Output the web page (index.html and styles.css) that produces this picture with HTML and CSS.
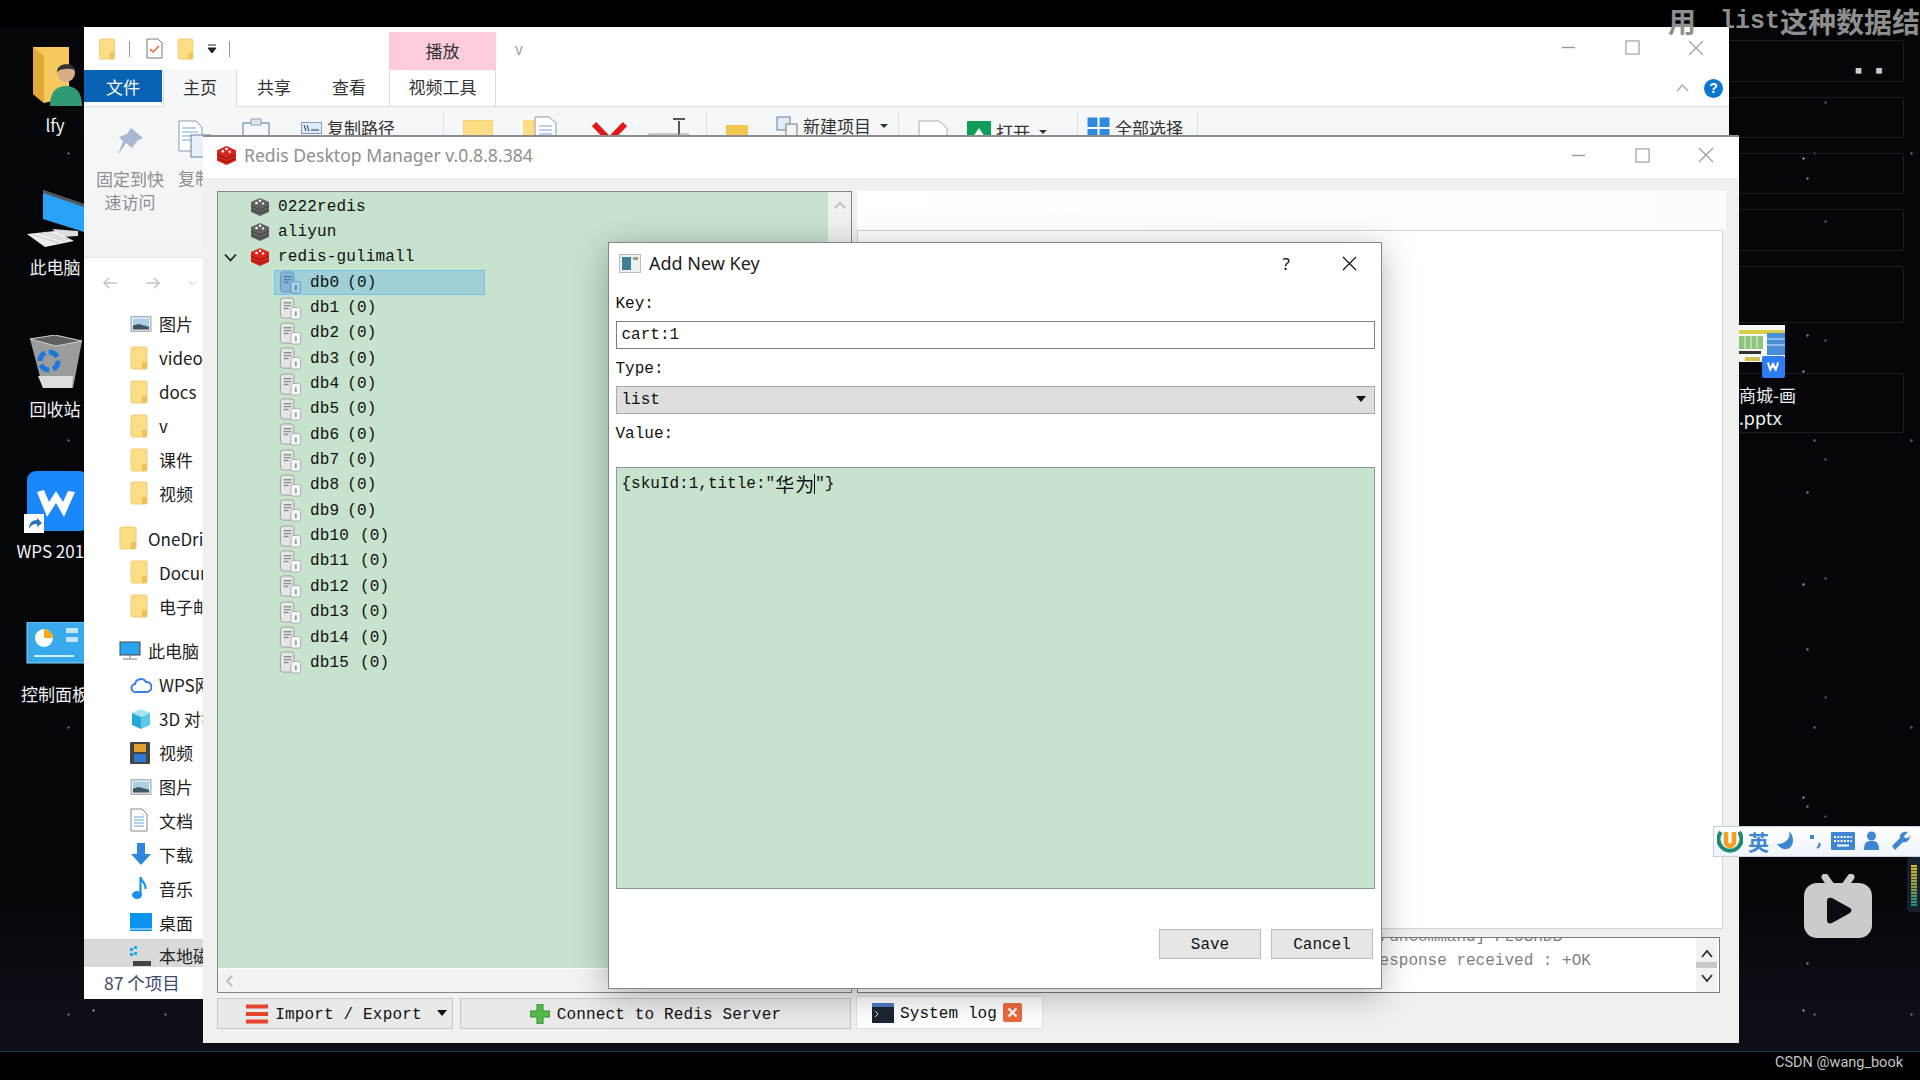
FILE: index.html
```html
<!DOCTYPE html>
<html lang="zh">
<head>
<meta charset="utf-8">
<title>Redis Desktop Manager</title>
<link rel="stylesheet" href="styles.css">
</head>
<body>
<svg class="defs" aria-hidden="true">
  <symbol id="folder" viewBox="0 0 18 24"><rect x="1" y="1" width="16" height="22" rx="1.5" fill="#fcdc84" stroke="#eccb70"/><rect x="12" y="16" width="5" height="7" fill="#eec25a"/></symbol>
  <symbol id="stack" viewBox="0 0 20 20"><path fill="currentColor" d="M10 1 19 5v10l-9 4-9-4V5Z"/><path d="M1 9l9 4 9-4M1 12.500l9 4 9-4" stroke="#00000055" fill="none"/><circle cx="10" cy="3.800" r="1.300" fill="#fff"/><circle cx="6.500" cy="6" r="1.300" fill="#fff"/><circle cx="13" cy="6.500" r="1.300" fill="#ddd"/></symbol>
  <symbol id="db" viewBox="0 0 24 24"><rect x="1.500" y="1" width="14" height="21" rx="3" fill="#e4e6e5" stroke="#9aa09e"/><path d="M5 6h8M5 9h8M5 12h5" stroke="#8b908e" stroke-width="1.500"/><rect x="12.500" y="11" width="10" height="12" rx="2" fill="#f7f7f7" stroke="#a8acaa"/><path d="M17.500 15v5" stroke="#9aa09e" stroke-width="2"/></symbol>
  <symbol id="dbsel" viewBox="0 0 24 24"><rect x="1.500" y="1" width="14" height="21" rx="3" fill="#86b4d6" stroke="#5f95bf"/><path d="M5 6h8M5 9h8M5 12h5" stroke="#4f83ad" stroke-width="1.500"/><rect x="12.500" y="11" width="10" height="12" rx="2" fill="#a9cfe6" stroke="#5f95bf"/><path d="M17.500 15v5" stroke="#4f83ad" stroke-width="2"/></symbol>
  <symbol id="pic" viewBox="0 0 24 20"><rect x="1" y="2" width="22" height="16" fill="#f4f6f8" stroke="#7f8b96"/><rect x="3" y="4" width="18" height="12" fill="#a8d0e8"/><path d="M3 16v-4l6-2 12 3v3Z" fill="#3f5560"/></symbol>
  <symbol id="min" viewBox="0 0 16 16"><path d="M1 8h14" stroke="#999" stroke-width="1.500"/></symbol>
  <symbol id="max" viewBox="0 0 16 16"><rect x="1" y="1" width="14" height="14" fill="none" stroke="#999" stroke-width="1.200"/></symbol>
  <symbol id="close" viewBox="0 0 16 16"><path d="M1 1l14 14M15 1 1 15" stroke="#999" stroke-width="1.100"/></symbol>
</svg>

<div class="desktop">
  <div class="panel p1"></div><div class="panel p2"></div><div class="panel p3"></div><div class="panel p4"></div><div class="panel p5"></div><div class="panel p6"></div>
  <div class="dots">■ ■</div>

  <div class="dk-item dk-lfy">
    <svg class="dk-icon" width="60" height="59" viewBox="25 47 60 59"><path d="M33 47h36v50L44 103 33 94Z" fill="#f5c95e"/><path d="M44 103V56L33 47v47Z" fill="#e0a93a"/><path d="M50 106c0-14 6-20 16-20s16 6 16 20Z" fill="#2f9a73"/><circle cx="66" cy="73" r="9" fill="#d7ac86"/><path d="M57 72c0-10 17-10 18-2-6-2-14-2-18 2Z" fill="#333"/></svg>
    <span class="dk-label">lfy</span>
  </div>
  <div class="dk-item dk-pc">
    <svg class="dk-icon" width="60" height="59" viewBox="25 188 60 59"><path d="M43 190l41 14v28l-41-13Z" fill="#27a2f5"/><path d="M43 190l41 14v3l-41-14Z" fill="#555"/><path d="M52 229l26 2v5l-16 1Z" fill="#ddd"/><path d="M27 234l28-3 19 10-29 6Z" fill="#eee"/><path d="M33 235l26 8M39 233l26 8M45 232l24 8" stroke="#bbb" stroke-width=".8"/></svg>
    <span class="dk-label">此电脑</span>
  </div>
  <div class="dk-item dk-bin">
    <svg class="dk-icon" width="60" height="54" viewBox="25 335 60 54"><path d="M30 339l25-4 27 6-9 47H43Z" fill="#9a9c9e"/><path d="M30 339l25-4 27 6-26 5Z" fill="#5d5f61" stroke="#ccc"/><path d="M38 376l35 0-1 12H43Z" fill="#dcdcdc"/><circle cx="49" cy="361" r="9" fill="none" stroke="#1878dc" stroke-width="5" stroke-dasharray="10 4"/></svg>
    <span class="dk-label">回收站</span>
  </div>
  <div class="dk-item dk-wps">
    <svg class="dk-icon" width="70" height="63" viewBox="20 471 70 63"><rect x="27" y="471" width="62" height="60" rx="9" fill="#1a87fb"/><path d="M37 492l10 25 9-14 8 14 11-25-7-1-5 11-7-11-7 11-5-12Z" fill="#fff"/><rect x="24" y="514" width="20" height="19" fill="#fff"/><path d="M29 529c0-6 3-9 8-9v-2l5 5-5 4v-3c-4 0-6 1-8 5Z" fill="#2c73b8"/></svg>
    <span class="dk-label">WPS 2019</span>
  </div>
  <div class="dk-item dk-cp">
    <svg class="dk-icon" width="60" height="42" viewBox="25 622 60 42"><rect x="27" y="622" width="58" height="41" fill="#38a9ea" stroke="#8cd4f5"/><circle cx="44" cy="638" r="9" fill="#fff"/><path d="M44 638v-9a9 9 0 0 1 9 9Z" fill="#f4a81e"/><rect x="66" y="628" width="12" height="5" fill="#bfe6f8"/><rect x="66" y="637" width="12" height="5" fill="#bfe6f8"/><path d="M34 656h40" stroke="#cdeefc" stroke-width="2"/></svg>
    <span class="dk-label">控制面板</span>
  </div>

  <div class="thumb">
    <svg width="58" height="54" viewBox="1739 325 58 54"><rect x="1739" y="325" width="46" height="37" fill="#f5f8f2"/><rect x="1739" y="330" width="46" height="4" fill="#d6cf45"/><rect x="1739" y="336" width="24" height="13" fill="#8cc67c"/><path d="M1745 336v13M1751 336v13M1757 336v13" stroke="#e6f2df"/><rect x="1767" y="333" width="18" height="22" fill="#4a8dd8"/><path d="M1767 339h18M1767 345h18" stroke="#dce8f6"/><rect x="1739" y="351" width="22" height="3" fill="#333"/><rect x="1745" y="357" width="15" height="4" fill="#d8c24f"/><rect x="1762" y="356" width="23" height="22" rx="2" fill="#2d7cf4"/><path d="M1767 363l3 9 3-5 3 5 3-9-2-1-1 5-3-5-3 5-1-5Z" fill="#fff"/></svg>
    <span class="thumb-name">商城-画</span>
    <span class="thumb-ext">.pptx</span>
  </div>

  <section class="explorer">
    <div class="qat">
      <svg class="q-f1" width="18" height="22"><use href="#folder"/></svg>
      <i class="q-sep q-s1"></i>
      <svg class="q-chk" width="17" height="21" viewBox="0 0 17 21"><path d="M1 1h11l4 4v15H1Z" fill="#fff" stroke="#777"/><path d="M4 11l3 3 6-6" fill="none" stroke="#e0692a" stroke-width="1.500"/></svg>
      <svg class="q-f2" width="19" height="22"><use href="#folder"/></svg>
      <svg class="q-car" width="10" height="10" viewBox="0 0 10 10"><path d="M1 1h8M1 4h8l-4 5Z" fill="#222" stroke="#222"/></svg>
      <i class="q-sep q-s2"></i>
      <div class="pink">播放</div>
      <span class="q-v">v</span>
      <div class="winctl">
        <span class="wbtn"><svg width="15" height="15"><use href="#min"/></svg></span>
        <span class="wbtn"><svg width="15" height="15"><use href="#max"/></svg></span>
        <span class="wbtn"><svg width="16" height="16"><use href="#close"/></svg></span>
      </div>
    </div>
    <div class="tabs">
      <span class="tab t-file">文件</span>
      <span class="tab t-home">主页</span>
      <span class="tab t-share">共享</span>
      <span class="tab t-view">查看</span>
      <span class="tab t-video">视频工具</span>
      <svg class="t-up" width="13" height="8" viewBox="0 0 13 8"><path d="M1 7l5.500-6L12 7" fill="none" stroke="#aaa" stroke-width="1.300"/></svg>
      <span class="t-help">?</span>
    </div>
    <div class="ribbon">
      <div class="rb rb-pin">
        <svg width="28" height="30" viewBox="0 0 28 30"><path d="M15 1l12 10-6 3-5 7-6-5-8 12 5-14-4-4 8-3Z" fill="#a9b8d2"/></svg>
        <span class="rb-cap">固定到快<br>速访问</span>
      </div>
      <div class="rb rb-copy">
        <svg width="34" height="38" viewBox="0 0 34 38"><path d="M1 1h17l6 6v24H1Z" fill="#fff" stroke="#8a97aa"/><path d="M4 8h14M4 12h16M4 16h16M4 20h16" stroke="#7ba4d6"/><rect x="13" y="15" width="20" height="22" fill="#e8f0fa" stroke="#5e7ea6"/></svg>
        <span class="rb-cap">复制</span>
      </div>
      <svg class="rb-paste" width="28" height="20" viewBox="0 0 28 20"><rect x="1" y="5" width="26" height="20" fill="#f6f8fa" stroke="#8c9fb8" stroke-width="1.500"/><rect x="9" y="1" width="10" height="6" fill="#dfe6ee" stroke="#8c9fb8"/></svg>
      <div class="rb-line rb-path"><svg width="21" height="12" viewBox="0 0 21 12"><rect x=".5" y=".5" width="20" height="11" fill="#dcecf8" stroke="#7e9cc0"/><path d="M3 3l2 6M6 3l2 6M10 8h8" stroke="#335" stroke-width="1"/></svg><span>复制路径</span></div>
      <i class="rb-sep rb-s1"></i>
      <svg class="rb-fold" width="30" height="24"><rect width="30" height="24" rx="1" fill="#fcdc84" stroke="#eccb70"/></svg>
      <svg class="rb-mv" width="37" height="24" viewBox="0 0 37 24"><rect x="1" y="4" width="18" height="20" fill="#fcdc84"/><path d="M13 1h14l7 6v17H13Z" fill="#fff" stroke="#8a97aa"/><path d="M17 10h13M17 14h13M17 18h13" stroke="#7ba4d6"/></svg>
      <svg class="rb-del" width="35" height="20" viewBox="0 0 35 20"><path d="M2 2l15.500 16L33 2" fill="none" stroke="#e01818" stroke-width="6"/></svg>
      <svg class="rb-ren" width="41" height="24" viewBox="0 0 41 24"><path d="M31 3v22M25 1h12" stroke="#555" stroke-width="2"/><rect x="1" y="16" width="40" height="10" fill="none" stroke="#999"/></svg>
      <i class="rb-sep rb-s2"></i>
      <svg class="rb-fold2" width="22" height="20"><rect width="22" height="20" fill="#f2c750"/></svg>
      <div class="rb-line rb-new"><svg width="22" height="20" viewBox="0 0 22 20"><rect x="1" y="1" width="13" height="13" fill="#dcecf8" stroke="#5e7ea6"/><rect x="10" y="8" width="11" height="12" fill="#f4f4f4" stroke="#777"/></svg><span>新建项目</span><b class="caret"></b></div>
      <i class="rb-sep rb-s3"></i>
      <svg class="rb-prop" width="32" height="24" viewBox="0 0 32 24"><path d="M2 1h20l8 7v20H2Z" fill="#fff" stroke="#aaa"/></svg>
      <div class="rb-line rb-open"><svg width="24" height="22" viewBox="0 0 24 22"><rect width="24" height="22" rx="1" fill="#0f9d58"/><path d="M6 16l6-9 6 9Z" fill="#fff"/></svg><span>打开</span><b class="caret"></b></div>
      <i class="rb-sep rb-s4"></i>
      <div class="rb-line rb-all"><svg width="23" height="22" viewBox="0 0 23 22"><rect x=".5" y=".5" width="22" height="21" fill="#2d8ae0"/><path d="M11.500 0v22M0 11h23" stroke="#fff" stroke-width="2"/></svg><span>全部选择</span></div>
      <i class="rb-sep rb-s5"></i>
    </div>
    <div class="main">
      <div class="navbar">
        <svg width="16" height="14" viewBox="0 0 16 14"><path d="M15 7H2M7 2 2 7l5 5" fill="none" stroke="#c4c4c4" stroke-width="1.500"/></svg>
        <svg width="16" height="14" viewBox="0 0 16 14"><path d="M1 7h13M9 2l5 5-5 5" fill="none" stroke="#c4c4c4" stroke-width="1.500"/></svg>
        <svg width="9" height="6" viewBox="0 0 9 6"><path d="M1 1l3.500 4L8 1" fill="none" stroke="#ccc"/></svg>
      </div>
      <div class="nav">
        <div class="nv"><svg width="22" height="18"><use href="#pic"/></svg><span>图片</span></div>
        <div class="nv"><svg width="18" height="24"><use href="#folder"/></svg><span>video</span></div>
        <div class="nv"><svg width="18" height="24"><use href="#folder"/></svg><span>docs</span></div>
        <div class="nv"><svg width="18" height="24"><use href="#folder"/></svg><span>v</span></div>
        <div class="nv"><svg width="18" height="24"><use href="#folder"/></svg><span>课件</span></div>
        <div class="nv"><svg width="18" height="24"><use href="#folder"/></svg><span>视频</span></div>
        <div class="nv lv1 grp"><svg width="18" height="24"><use href="#folder"/></svg><span>OneDrive</span></div>
        <div class="nv"><svg width="18" height="24"><use href="#folder"/></svg><span>Documents</span></div>
        <div class="nv"><svg width="18" height="24"><use href="#folder"/></svg><span>电子邮件</span></div>
        <div class="nv lv1 grp"><svg width="22" height="20" viewBox="0 0 22 20"><rect x="1" y="1" width="20" height="13" fill="#2ba4ee" stroke="#444"/><path d="M11 14v3M4 18h14" stroke="#777"/></svg><span>此电脑</span></div>
        <div class="nv"><svg width="22" height="18" viewBox="0 0 22 18"><path d="M6 16a4 4 0 0 1-1-8 6 6 0 0 1 11-2 5 5 0 0 1 1 10Z" fill="none" stroke="#3b7de0" stroke-width="2"/></svg><span>WPS网盘</span></div>
        <div class="nv"><svg width="22" height="22" viewBox="0 0 22 22"><path d="M11 1l9 4-9 4-9-4Z" fill="#a5e4f5"/><path d="M2 5l9 4v12l-9-4Z" fill="#27a6da"/><path d="M20 5l-9 4v12l9-4Z" fill="#5cc8ea"/></svg><span>3D 对象</span></div>
        <div class="nv"><svg width="20" height="22" viewBox="0 0 20 22"><rect width="20" height="22" rx="1" fill="#444"/><rect x="4" y="2" width="12" height="8" fill="#e0a030"/><rect x="4" y="12" width="12" height="8" fill="#2f78d0"/></svg><span>视频</span></div>
        <div class="nv"><svg width="22" height="18"><use href="#pic"/></svg><span>图片</span></div>
        <div class="nv"><svg width="18" height="24" viewBox="0 0 18 24"><path d="M1 1h11l5 5v17H1Z" fill="#fff" stroke="#888"/><path d="M4 9h10M4 12h10M4 15h10M4 18h10" stroke="#5aa7d8"/></svg><span>文档</span></div>
        <div class="nv"><svg width="22" height="24" viewBox="0 0 22 24"><path d="M7 1h8v11h6L11 23 1 12h6Z" fill="#2f86dc"/></svg><span>下载</span></div>
        <div class="nv"><svg width="18" height="24" viewBox="0 0 18 24"><ellipse cx="7" cy="19" rx="5" ry="4" fill="#1e90e8"/><path d="M10.500 19V1c1 5 6 6 5 12" fill="none" stroke="#1e90e8" stroke-width="2.200"/></svg><span>音乐</span></div>
        <div class="nv"><svg width="22" height="18" viewBox="0 0 22 18"><rect width="22" height="18" fill="#0b93ee"/><path d="M0 16h22" stroke="#d6eefc"/></svg><span>桌面</span></div>
        <div class="nv nv-sel"><svg width="22" height="20" viewBox="0 0 22 20"><rect x="0" y="2" width="3" height="3" fill="#19a8e8"/><rect x="4" y="0" width="3" height="3" fill="#19a8e8"/><rect x="0" y="7" width="3" height="3" fill="#19a8e8"/><rect x="4" y="6" width="3" height="3" fill="#19a8e8"/><rect x="3" y="15" width="18" height="5" fill="#444"/></svg><span>本地磁盘 (C:)</span></div>
      </div>
      <div class="status">87 个项目</div>
    </div>
  </section>

  <section class="redis">
    <header class="rd-title">
      <svg class="rd-logo" width="23" height="21" style="color:#d5261f"><use href="#stack"/></svg>
      <span class="rd-name">Redis Desktop Manager v.0.8.8.384</span>
      <div class="winctl">
        <span class="wbtn"><svg width="15" height="15"><use href="#min"/></svg></span>
        <span class="wbtn"><svg width="15" height="15"><use href="#max"/></svg></span>
        <span class="wbtn"><svg width="16" height="16"><use href="#close"/></svg></span>
      </div>
    </header>
    <div class="rd-body">
      <div class="rd-left">
        <div class="tree">
          <div class="tree-top">
            <div class="tree-list">
              <div class="srv"><i class="arrow"></i><svg class="srv-ic grey" width="20" height="20"><use href="#stack"/></svg><span>0222redis</span></div>
              <div class="srv"><i class="arrow"></i><svg class="srv-ic grey" width="20" height="20"><use href="#stack"/></svg><span>aliyun</span></div>
              <div class="srv"><svg class="arrow" width="13" height="9" viewBox="0 0 13 9"><path d="M1 1.500l5.500 6 5.500-6" fill="none" stroke="#222" stroke-width="1.800"/></svg><svg class="srv-ic red" width="20" height="20"><use href="#stack"/></svg><span>redis-gulimall</span></div>
              <div class="dbr sel"><svg width="23" height="23"><use href="#dbsel"/></svg><span class="n">db0</span><span>(0)</span></div>
              <div class="dbr"><svg width="23" height="23"><use href="#db"/></svg><span class="n">db1</span><span>(0)</span></div>
              <div class="dbr"><svg width="23" height="23"><use href="#db"/></svg><span class="n">db2</span><span>(0)</span></div>
              <div class="dbr"><svg width="23" height="23"><use href="#db"/></svg><span class="n">db3</span><span>(0)</span></div>
              <div class="dbr"><svg width="23" height="23"><use href="#db"/></svg><span class="n">db4</span><span>(0)</span></div>
              <div class="dbr"><svg width="23" height="23"><use href="#db"/></svg><span class="n">db5</span><span>(0)</span></div>
              <div class="dbr"><svg width="23" height="23"><use href="#db"/></svg><span class="n">db6</span><span>(0)</span></div>
              <div class="dbr"><svg width="23" height="23"><use href="#db"/></svg><span class="n">db7</span><span>(0)</span></div>
              <div class="dbr"><svg width="23" height="23"><use href="#db"/></svg><span class="n">db8</span><span>(0)</span></div>
              <div class="dbr"><svg width="23" height="23"><use href="#db"/></svg><span class="n">db9</span><span>(0)</span></div>
              <div class="dbr"><svg width="23" height="23"><use href="#db"/></svg><span class="n n2">db10</span><span>(0)</span></div>
              <div class="dbr"><svg width="23" height="23"><use href="#db"/></svg><span class="n n2">db11</span><span>(0)</span></div>
              <div class="dbr"><svg width="23" height="23"><use href="#db"/></svg><span class="n n2">db12</span><span>(0)</span></div>
              <div class="dbr"><svg width="23" height="23"><use href="#db"/></svg><span class="n n2">db13</span><span>(0)</span></div>
              <div class="dbr"><svg width="23" height="23"><use href="#db"/></svg><span class="n n2">db14</span><span>(0)</span></div>
              <div class="dbr"><svg width="23" height="23"><use href="#db"/></svg><span class="n n2">db15</span><span>(0)</span></div>
            </div>
            <div class="vscroll"><svg width="12" height="8" viewBox="0 0 12 8"><path d="M1 7l5-5 5 5" fill="none" stroke="#c2c2c2" stroke-width="2"/></svg></div>
          </div>
          <div class="hscroll"><svg width="9" height="12" viewBox="0 0 9 12"><path d="M7 1 2 6l5 5" fill="none" stroke="#bdbdbd" stroke-width="2"/></svg></div>
        </div>
        <div class="toolbar">
          <button class="tbtn t-imp"><svg width="22" height="20" viewBox="0 0 22 20"><path d="M0 2.500h22M0 10h22M0 17.500h22" stroke="#e5432b" stroke-width="4"/></svg><span>Import / Export</span><b class="tri"></b></button>
          <button class="tbtn t-con"><svg width="20" height="20" viewBox="0 0 20 20"><path d="M7 0h6v7h7v6h-7v7H7v-7H0V7h7Z" fill="#55b948" stroke="#2f8f34"/></svg><span>Connect to Redis Server</span></button>
        </div>
      </div>
      <div class="rd-right">
        <div class="rr-top"></div>
        <div class="pane"></div>
        <div class="logbox">
          <div class="logtext"><div>[runCommand] FLUSHDB</div><div>response received : +OK</div></div>
          <div class="logscroll">
            <svg width="12" height="9" viewBox="0 0 12 9"><path d="M1 8l5-6 5 6" fill="none" stroke="#333" stroke-width="1.800"/></svg>
            <i class="thumbbar"></i>
            <svg width="12" height="9" viewBox="0 0 12 9"><path d="M1 1l5 6 5-6" fill="none" stroke="#333" stroke-width="1.800"/></svg>
          </div>
        </div>
        <div class="logtab">
          <svg width="22" height="20" viewBox="0 0 22 20"><rect width="22" height="20" fill="#1d2530"/><rect width="22" height="4" fill="#4a7cc4"/><path d="M3 8l3 3-3 3" fill="none" stroke="#ddd"/></svg>
          <span>System log</span>
          <svg width="19" height="19" viewBox="0 0 19 19"><rect width="19" height="19" rx="2" fill="#ee6a3c"/><path d="M5.500 5.500l8 8M13.500 5.500l-8 8" stroke="#fff" stroke-width="2.400"/></svg>
        </div>
      </div>
    </div>
  </section>

  <section class="dialog">
    <header class="dl-title">
      <svg width="22" height="19" viewBox="0 0 22 19"><rect x=".5" y=".5" width="21" height="18" fill="#eef0f0" stroke="#bbb"/><rect x="3" y="3" width="9" height="13" fill="#3f7f96"/><rect x="14" y="3" width="5" height="3" fill="#999"/></svg>
      <span class="dl-name">Add New Key</span>
      <span class="dl-q">?</span>
      <svg class="dl-x" width="15" height="15" viewBox="0 0 15 15"><path d="M1 1l13 13M14 1 1 14" stroke="#111" stroke-width="1.200"/></svg>
    </header>
    <div class="dl-body">
      <div class="lb lb-key">Key:</div>
      <div class="field">cart:1</div>
      <div class="lb lb-type">Type:</div>
      <div class="field select"><span>list</span><b class="tri"></b></div>
      <div class="lb lb-val">Value:</div>
      <div class="area">{skuId:1,title:"<span class="cjk">华为</span><i class="cursor"></i>"}</div>
      <div class="dl-actions">
        <button class="dbtn">Save</button>
        <button class="dbtn">Cancel</button>
      </div>
    </div>
  </section>

  <div class="ime">
    <svg width="26" height="24" viewBox="0 0 26 24"><path d="M4 3a11.500 11.500 0 1 0 18 0" fill="none" stroke="#1f8a70" stroke-width="4"/><path d="M9 3v10a4 4 0 0 0 8 0V3" fill="none" stroke="#f5a020" stroke-width="4.500"/></svg>
    <span class="ime-en">英</span>
    <svg width="18" height="19" viewBox="0 0 18 19"><path d="M12 0C14 7 9 13 0 13c3 4 7 6 10 5 6-1 9-11 2-18Z" fill="#3f86d2"/></svg>
    <svg width="11" height="16" viewBox="0 0 11 16"><rect x="0" y="2" width="4" height="4" fill="#3f86d2"/><path d="M9 10c1 2 0 4-2 5" stroke="#3f86d2" stroke-width="2.200" fill="none"/></svg>
    <svg width="24" height="18" viewBox="0 0 24 18"><rect width="24" height="18" rx="1" fill="#3f86d2"/><path d="M3 5h18M3 9h18" stroke="#fff" stroke-width="2" stroke-dasharray="2 1.300"/><path d="M6 13.500h12" stroke="#fff" stroke-width="2"/></svg>
    <svg width="15" height="19" viewBox="0 0 15 19"><circle cx="7.500" cy="5" r="4.500" fill="#3f86d2"/><path d="M0 19c0-8 3-9 7.500-9S15 11 15 19Z" fill="#3f86d2"/></svg>
    <svg width="20" height="19" viewBox="0 0 20 19"><path d="M2 15 10 7c-1-4 3-7 8-6l-4 4 1 2 3 0 2-3c0 5-3 8-7 7l-8 8Z" fill="#3f86d2"/></svg>
  </div>
  <div class="meter"><i class="m-bar"></i></div>
  <svg class="tv" width="68" height="64" viewBox="0 0 68 64"><path d="M21 3l7 10M47 3l-7 10" stroke="#ccc" stroke-width="7" stroke-linecap="round"/><rect y="9" width="68" height="55" rx="13" fill="#cbcbcb"/><path d="M23 27c0-3 2-4 5-3l18 10c2 1 2 3 0 5l-18 10c-3 1-5 0-5-3Z" fill="#0a0d14"/></svg>

  <div class="bar-top"></div>
  <div class="bar-bottom"><span class="csdn">CSDN @wang_book</span></div>
  <div class="watermark"><span class="wm-c">用</span><span class="wm-l">list</span><span class="wm-c">这种数据结构</span></div>
</div>
</body>
</html>
```
FILE: styles.css
```css
* { box-sizing: border-box; }
html, body { margin: 0; padding: 0; background: #000; }
body { width: 1920px; height: 1080px; overflow: hidden; font-family: "Noto Sans CJK SC", "Noto Sans", sans-serif; }
.defs { position: absolute; width: 0; height: 0; }
svg { display: block; flex: none; }

.desktop {
  position: relative; width: 1920px; height: 1080px; overflow: hidden;
  background-color: #05060a;
  background-image:
    radial-gradient(circle, #778 0 1px, transparent 1.500px),
    radial-gradient(circle, #667 0 1px, transparent 1.500px),
    radial-gradient(circle, #556 0 1px, transparent 1.500px),
    radial-gradient(circle, #445 0 1px, transparent 1.500px),
    linear-gradient(#05060a 900px, #0c1016 1000px);
  background-size: 171px 213px, 233px 157px, 97px 287px, 131px 119px, 100% 100%;
  background-position: 8px 52px, 60px 100px, 20px 10px, 1760px 400px, 0 0;
}

.panel { position: absolute; left: 1700px; width: 204px; border: 1px solid #1b1d20; border-radius: 2px; }
.p1 { top: 40px; height: 42px; }
.p2 { top: 97px; height: 41px; }
.p3 { top: 153px; height: 41px; }
.p4 { top: 209px; height: 42px; }
.p5 { top: 266px; height: 57px; }
.p6 { top: 373px; height: 60px; }
.dots { position: absolute; left: 1855px; top: 62px; font-size: 7px; letter-spacing: 6px; color: #ccc; line-height: 16px; }

.dk-item { position: absolute; left: 0; width: 110px; display: flex; flex-direction: column; align-items: center; }
.dk-label { color: #f2f2f2; font-size: 17px; line-height: 24px; white-space: nowrap; }
.dk-lfy { top: 47px; }
.dk-lfy .dk-icon { margin-bottom: 7px; }
.dk-pc { top: 188px; }
.dk-pc .dk-icon { margin-bottom: 8px; }
.dk-bin { top: 335px; }
.dk-bin .dk-icon { margin-bottom: 8px; }
.dk-wps { top: 471px; }
.dk-wps .dk-icon { margin-bottom: 5px; }
.dk-cp { top: 622px; }
.dk-cp .dk-icon { margin-bottom: 18px; }

.thumb { position: absolute; left: 1739px; top: 325px; display: flex; flex-direction: column; color: #eee; font-size: 17px; line-height: 24px; }
.thumb-name { margin-top: 4px; }
.thumb-ext { font-family: "Noto Sans", sans-serif; font-size: 18px; line-height: 22px; }

/* explorer window */
.explorer { position: absolute; left: 84px; top: 27px; width: 1645px; height: 972px; background: #fff; display: flex; flex-direction: column; color: #111; }
.qat { height: 43px; display: flex; align-items: center; flex: none; }
.q-f1 { margin-left: 14px; }
.q-sep { display: block; width: 1px; height: 16px; background: #999; }
.q-s1 { margin-left: 13px; }
.q-chk { margin-left: 16px; }
.q-f2 { margin-left: 13px; }
.q-car { margin-left: 12px; }
.q-s2 { margin-left: 12px; }
.pink { margin-left: 159px; width: 107px; height: 38px; margin-top: 5px; background: #fecbdb; display: flex; align-items: center; justify-content: center; font-size: 17px; color: #333; padding-bottom: 2px; }
.q-v { margin-left: 19px; color: #999; font-size: 15px; }
.winctl { margin-left: auto; margin-right: 1px; display: flex; align-items: center; }
.qat .winctl { margin-top: -2px; }
.wbtn { width: 64px; display: flex; justify-content: center; }
.tabs { position: relative; height: 37px; flex: none; display: flex; align-items: flex-start; border-bottom: 1px solid #dcdcdc; font-size: 17px; }
.tab { height: 33px; display: flex; align-items: center; justify-content: center; color: #333; }
.t-file { width: 78px; height: 32px; background: #0a62b4; color: #fff; }
.t-home { width: 74px; margin-left: 1px; height: 37px; padding-bottom: 4px; background: #f6f7f8; border: 1px solid #dcdcdc; border-bottom: 0; border-top: 0; }
.t-share { width: 74px; }
.t-view { width: 76px; }
.t-video { width: 107px; margin-left: 2px; height: 36px; padding-bottom: 3px; border: 1px solid #dedede; border-width: 0 1px; }
.t-up { margin-left: auto; margin-top: 14px; margin-right: 15px; }
.t-help { width: 19px; height: 19px; margin-top: 9px; margin-right: 6px; border-radius: 50%; background: #0a78d2; color: #fff; font: bold 14px/19px "Liberation Sans", sans-serif; text-align: center; }
.ribbon { height: 151px; flex: none; display: flex; align-items: flex-start; padding: 13px 0 0 12px; background: linear-gradient(#f6f7f8, #f2f3f4); border-bottom: 1px solid #e2e2e2; font-size: 17px; color: #333; }
.rb { display: flex; flex-direction: column; align-items: center; flex: none; }
.rb-cap { color: #8a8f94; text-align: center; line-height: 23px; font-size: 17px; white-space: nowrap; }
.rb-pin { width: 68px; padding-top: 7px; }
.rb-pin .rb-cap { margin-top: 10px; }
.rb-copy { width: 34px; margin-left: 14px; }
.rb-copy .rb-cap { margin-top: 8px; }
.rb-paste { margin-left: 30px; margin-top: -2px; }
.rb-line { display: flex; align-items: center; gap: 5px; flex: none; white-space: nowrap; line-height: 20px; height: 20px; }
.rb-path { margin-left: 31px; margin-top: -2px; }
.rb-sep { display: block; width: 1px; height: 120px; background: #e0e0e0; flex: none; margin-top: -8px; }
.rb-s1 { margin-left: 48px; }
.rb-fold { margin-left: 19px; }
.rb-mv { margin-left: 29px; margin-top: -4px; }
.rb-del { margin-left: 33px; margin-top: 2px; }
.rb-ren { margin-left: 21px; margin-top: -2px; }
.rb-s2 { margin-left: 17px; }
.rb-fold2 { margin-left: 19px; margin-top: 5px; }
.rb-new { margin-left: 28px; margin-top: -4px; }
.caret { display: block; width: 0; height: 0; border: 4px solid transparent; border-top-color: #333; border-bottom: 0; margin-left: 4px; }
.rb-s3 { margin-left: 10px; }
.rb-prop { margin-left: 18px; }
.rb-open { margin-left: 18px; margin-top: 2px; }
.rb-s4 { margin-left: 30px; }
.rb-all { margin-left: 9px; margin-top: -2px; }
.rb-s5 { margin-left: 14px; }

.main { flex: 1; min-height: 0; display: flex; flex-direction: column; }
.navbar { height: 50px; flex: none; display: flex; align-items: center; padding-left: 18px; gap: 27px; }
.nav { flex: 1; min-height: 0; overflow: hidden; font-size: 17px; color: #222; margin-top: -1px; }
.nv { height: 33.900px; display: flex; align-items: center; white-space: nowrap; position: relative; padding-left: 75px; }
.nv svg { position: absolute; left: 46px; top: 50%; transform: translateY(-50%); }
.lv1 { padding-left: 64px; }
.lv1 svg { left: 35px; }
.grp { margin-top: 11px; }
.nv-sel { background: #d9d9d9; }
.status { height: 32px; flex: none; display: flex; align-items: center; padding: 0 0 2px 20px; font-size: 17.500px; color: #3c4c6c; }

/* redis window */
.redis { position: absolute; left: 203px; top: 135px; width: 1536px; height: 908px; background: #eff1ef; display: flex; flex-direction: column; border-top: 2px solid #8c8c8c; font-family: "Liberation Mono", "Noto Sans CJK SC", monospace; font-size: 16px; color: #111; }
.rd-title { height: 41px; flex: none; background: #fff; display: flex; align-items: center; padding-bottom: 5px; }
.rd-logo { margin-left: 12px; }
.rd-name { margin-left: 6px; font: 17.600px "Noto Sans", sans-serif; color: #8f8f8f; }
.rd-body { flex: 1; display: flex; padding: 13px 0 0 14px; }
.rd-left { width: 635px; flex: none; display: flex; flex-direction: column; }
.tree { height: 802px; flex: none; border: 1.500px solid #7f8a82; display: flex; flex-direction: column; background: #f1f3f1; }
.tree-top { flex: 1; display: flex; min-height: 0; }
.tree-list { flex: 1; background: #c7e2cd; padding-top: 2px; letter-spacing: .15px; }
.vscroll { width: 23px; flex: none; display: flex; justify-content: center; padding-top: 9px; background: #f0f2f0; }
.hscroll { height: 24px; flex: none; display: flex; align-items: center; padding-left: 7px; border-top: 1px solid #fff; }
.srv { height: 25.350px; display: flex; align-items: center; }
.arrow { width: 13px; height: 9px; margin-left: 6px; display: block; flex: none; }
.srv-ic { margin-left: 13px; margin-right: 8px; }
.grey { color: #616161; }
.red { color: #d9251c; }
.dbr { height: 25.350px; display: flex; align-items: center; margin-left: 56px; width: 211px; padding-left: 5px; gap: 8px; }
.n { margin-right: 0; }
.n2 { margin-right: 3px; }
.sel { background: #9fd0d8; outline: 1px solid #77c0e6; outline-offset: -1px; }
.toolbar { display: flex; gap: 7px; margin-top: 5px; letter-spacing: .15px; }
.tbtn { height: 31px; border: 1px solid #c6c8c6; background: #e8e9e8; display: flex; align-items: center; justify-content: center; padding: 2px 0 0; font: inherit; letter-spacing: inherit; color: #111; }
.t-imp { width: 236px; padding-left: 23px; }
.t-imp span { margin-left: 7px; }
.tbtn svg { margin-top: -2px; }
.tri { display: block; width: 0; height: 0; border: 5px solid transparent; border-top: 6px solid #111; border-bottom: 0; }
.t-imp .tri { margin-left: 15px; margin-top: -4px; }
.t-con { width: 391px; gap: 7px; }
.rd-right { width: 869px; margin-left: 5px; flex: none; display: flex; flex-direction: column; }
.rr-top { height: 39px; flex: none; background: linear-gradient(90deg, #fff, #fbfcfb); }
.pane { height: 699px; width: 866px; flex: none; background: #fff; border: 1px solid #d2d4d2; }
.logbox { margin-top: 8px; width: 863px; height: 56px; flex: none; background: #fff; border: 1.500px solid #7a7a7a; display: flex; overflow: hidden; }
.logtext { flex: 1; padding-left: 512px; margin-top: -13px; line-height: 24px; color: #808080; white-space: nowrap; }
.logscroll { width: 21px; margin-right: 2px; flex: none; background: #f2f2f2; display: flex; flex-direction: column; align-items: center; padding-top: 11px; }
.thumbbar { display: block; width: 100%; height: 6px; background: #c8c8c8; margin: 4px 0 6px; }
.logtab { margin-top: 3px; margin-left: -1px; width: 187px; height: 33px; flex: none; background: #fff; border: 1px solid #e0e2e0; display: flex; align-items: center; padding-left: 15px; gap: 6px; letter-spacing: .1px; }
.logtab span { white-space: nowrap; padding-top: 3px; }

/* dialog */
.dialog { position: absolute; left: 608px; top: 242px; width: 774px; height: 747px; background: #fff; border: 1.500px solid #858585; box-shadow: 0 6px 32px rgba(0,0,0,.28); display: flex; flex-direction: column; font-family: "Liberation Mono", "Noto Sans CJK SC", monospace; font-size: 16px; color: #111; }
.dl-title { height: 42px; flex: none; display: flex; align-items: center; padding: 0 0 2px 10px; }
.dl-name { margin-left: 8px; font: 18px "Noto Sans", sans-serif; color: #222; }
.dl-q { margin-left: auto; font: 17px "Noto Sans", sans-serif; }
.dl-x { margin-left: 52px; margin-right: 24px; }
.dl-body { flex: 1; display: flex; flex-direction: column; padding: 0 6.500px; }
.lb { flex: none; display: flex; align-items: center; }
.lb-key { height: 36px; padding-top: 2px; }
.lb-type { height: 37px; padding-top: 3px; }
.lb-val { height: 53px; padding-bottom: 14px; }
.field { height: 28px; flex: none; border: 1.500px solid #7f7f7f; display: flex; align-items: center; padding-left: 5px; background: #fff; }
.select { background: #dedede; border-color: #a8a8a8; justify-content: space-between; padding-right: 8px; }
.select .tri { margin-top: -3px; }
.area { height: 422px; flex: none; background: #c7e2cd; border: 1.500px solid #8a9a8e; padding: 4px 5px; line-height: 24px; white-space: nowrap; display: flex; align-items: flex-start; }
.cjk { font-family: "Noto Sans CJK SC", sans-serif; font-size: 19px; line-height: 24px; letter-spacing: 1px; }
.cursor { display: inline-block; width: 1px; height: 20px; margin: 2px 0 0 -1px; background: #111; }
.dl-actions { margin-top: 40px; display: flex; justify-content: flex-end; gap: 10px; padding-right: 1.500px; }
.dbtn { width: 102px; height: 30px; border: 1px solid #bdbdbd; background: #e6e6e6; font: inherit; color: #111; padding: 2px 0 0; }

/* overlays */
.ime { position: absolute; left: 1713px; top: 826px; width: 207px; height: 31px; background: linear-gradient(#fff, #eef4fb); border: 1px solid #c4d2e0; border-right: 0; display: flex; align-items: center; padding: 0 0 2px 3px; }
.ime svg:nth-of-type(2) { margin-left: 8px; }
.ime svg:nth-of-type(3) { margin-left: 15px; }
.ime svg:nth-of-type(4) { margin-left: 10px; }
.ime svg:nth-of-type(5) { margin-left: 9px; }
.ime svg:nth-of-type(6) { margin-left: 11px; }
.ime-en { margin-left: 5px; color: #3f86d2; font-size: 21px; font-weight: 700; line-height: 28px; }
.meter { position: absolute; left: 1907px; top: 857px; width: 13px; height: 55px; background: #18212b; border-radius: 4px 0 0 4px; padding: 8px 0 6px 4px; }
.m-bar { display: block; width: 6px; height: 100%; background: repeating-linear-gradient(transparent 0 2px, #0008 2px 3px), linear-gradient(#d8b93a, #8ea24a 50%, #1f8a8a); }
.tv { position: absolute; left: 1804px; top: 874px; }
.bar-top { position: absolute; left: 0; top: 0; width: 100%; height: 27px; background: #000; }
.bar-bottom { position: absolute; left: 0; top: 1051px; width: 100%; height: 29px; background: #000; border-top: 1px solid #16354f; display: flex; justify-content: flex-end; align-items: center; padding: 0 17px 8px 0; }
.csdn { font: 14.500px "Roboto", sans-serif; color: #c4c4c4; }
.watermark { position: absolute; left: 1668px; top: 2px; width: 252px; height: 38px; overflow: hidden; white-space: nowrap; color: #8e8e8e; font-weight: 700; display: flex; align-items: center; }
.wm-c { font-size: 28px; flex: none; }
.wm-l { font: 700 25px "Liberation Mono", monospace; margin: 0 0 0 24px; flex: none; }
```
